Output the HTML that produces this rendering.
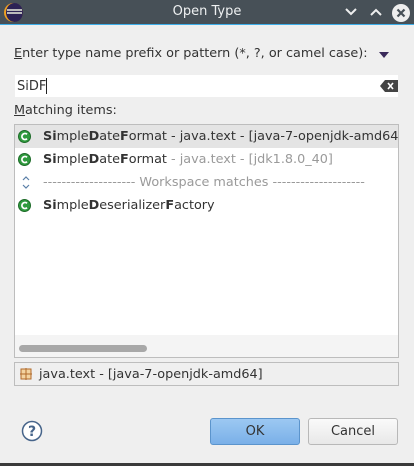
<!DOCTYPE html>
<html><head><style>
*{margin:0;padding:0;box-sizing:border-box}
body{width:414px;height:466px;background:#efefef;font-family:"DejaVu Sans","Liberation Sans",sans-serif;font-size:12.8px;color:#333;position:relative;overflow:hidden}
.abs{position:absolute}
.title{left:0;top:0;width:414px;height:25px;background:#475057;border-bottom:1px solid #3daee9}
.ttext{left:0;width:414px;top:4px;text-align:center;color:#eef0f1;font-size:13px}
.inp{left:15px;top:75px;width:383px;height:22px;background:#fff}
.list{left:14px;top:124px;width:385px;height:234px;background:#fff;border:1px solid #bdbdbd}
.row{position:absolute;left:0;width:383px;height:23px;white-space:nowrap;overflow:hidden}
.row span.t{position:absolute;left:28px;top:4px}
.ic{position:absolute;left:3px;top:5px}
.g{color:#9a9a9a}
.btn{top:418px;height:27px;border-radius:3px;text-align:center;line-height:25px;font-size:13px}
</style></head><body>
<div class="abs title"></div>
<div class="abs" style="left:4px;top:3px;width:19px;height:19px;border-radius:50%;background:#f0a020"></div>
<div class="abs" style="left:6px;top:3px;width:17px;height:19px;border-radius:50%;background:#2c2255"></div>
<div class="abs" style="left:7px;top:9px;width:15px;height:2px;background:#bbb"></div>
<div class="abs" style="left:7px;top:12px;width:15px;height:2px;background:#bbb"></div>
<div class="abs ttext">Open Type</div>
<svg class="abs" style="left:344px;top:7px" width="14" height="10"><path d="M2 2 L7 7 L12 2" stroke="#eee" stroke-width="2" fill="none"/></svg>
<svg class="abs" style="left:369px;top:7px" width="14" height="10"><path d="M2 8 L7 3 L12 8" stroke="#eee" stroke-width="2" fill="none"/></svg>
<svg class="abs" style="left:391px;top:3px" width="20" height="20"><circle cx="10" cy="10" r="9" fill="#eee"/><path d="M6.5 6.5 L13.5 13.5 M13.5 6.5 L6.5 13.5" stroke="#475057" stroke-width="2.2"/></svg>
<div class="abs" style="left:14px;top:46px"><u>E</u>nter type name prefix or pattern (*, ?, or camel case):</div>
<svg class="abs" style="left:378px;top:51px" width="12" height="8"><path d="M1 1 L11 1 L6 7 Z" fill="#3a2a5a"/></svg>
<div class="abs inp"></div>
<div class="abs" style="left:17px;top:79px;font-size:13px">SiDF</div>
<div class="abs" style="left:46px;top:78px;width:1px;height:16px;background:#222"></div>
<svg class="abs" style="left:380px;top:80px" width="18" height="12"><path d="M0 6 L5 0 L18 0 L18 12 L5 12 Z" fill="#444"/><path d="M8 3 L13 9 M13 3 L8 9" stroke="#fff" stroke-width="1.6"/></svg>
<div class="abs" style="left:14px;top:103px"><u>M</u>atching items:</div>
<div class="abs list">
<div class="row" style="top:0;background:#e4e4e4"><svg class="ic" width="13" height="13"><circle cx="6.5" cy="6.5" r="6" fill="#2f9a3e" stroke="#1d6b28"/><path d="M9 4.3 A3 3 0 1 0 9 8.7" stroke="#fff" stroke-width="1.8" fill="none"/></svg><span class="t"><b>Si</b>mple<b>D</b>ate<b>F</b>ormat - java.text - [java-7-openjdk-amd64]</span></div>
<div class="row" style="top:23px"><svg class="ic" width="13" height="13"><circle cx="6.5" cy="6.5" r="6" fill="#2f9a3e" stroke="#1d6b28"/><path d="M9 4.3 A3 3 0 1 0 9 8.7" stroke="#fff" stroke-width="1.8" fill="none"/></svg><span class="t"><b>Si</b>mple<b>D</b>ate<b>F</b>ormat <span class="g">- java.text - [jdk1.8.0_40]</span></span></div>
<div class="row" style="top:46px"><svg style="position:absolute;left:6px;top:3px" width="10" height="17"><path d="M2 6 L5 3 L8 6 M2 11 L5 14 L8 11" stroke="#5a7fa8" stroke-width="1.2" fill="none"/></svg><span class="t g">-------------------- Workspace matches --------------------</span></div>
<div class="row" style="top:69px"><svg class="ic" width="13" height="13"><circle cx="6.5" cy="6.5" r="6" fill="#2f9a3e" stroke="#1d6b28"/><path d="M9 4.3 A3 3 0 1 0 9 8.7" stroke="#fff" stroke-width="1.8" fill="none"/></svg><span class="t"><b>Si</b>mple<b>D</b>eserializer<b>F</b>actory</span></div>
<div style="position:absolute;left:0;top:210px;width:383px;height:22px;background:#f4f4f4"></div>
<div style="position:absolute;left:4px;top:220px;width:128px;height:7px;border-radius:4px;background:#a8a8a8"></div>
</div>
<div class="abs" style="left:14px;top:362px;width:385px;height:24px;border:1px solid #bdbdbd"></div>
<svg class="abs" style="left:20px;top:368px" width="12" height="12"><rect x="1" y="1" width="10" height="10" fill="#f3d3a0" stroke="#b06a2a"/><path d="M6 0 V12 M0 6 H12" stroke="#b06a2a"/></svg>
<div class="abs" style="left:39px;top:367px">java.text - [java-7-openjdk-amd64]</div>
<svg class="abs" style="left:21px;top:420px" width="22" height="22"><circle cx="11" cy="11" r="9.5" fill="#fff" stroke="#46648a" stroke-width="1.5"/><text x="11" y="16" text-anchor="middle" font-size="14" font-weight="bold" fill="#46648a" font-family="DejaVu Sans">?</text></svg>
<div class="abs btn" style="left:210px;width:90px;background:linear-gradient(#9cc8f2,#7ab0e8);border:1px solid #5b94cc">OK</div>
<div class="abs btn" style="left:308px;width:90px;background:linear-gradient(#fafafa,#e8e8e8);border:1px solid #b8b8b8">Cancel</div>
<div class="abs" style="left:0;top:463px;width:414px;height:3px;background:#3a3a3a"></div>
</body></html>
